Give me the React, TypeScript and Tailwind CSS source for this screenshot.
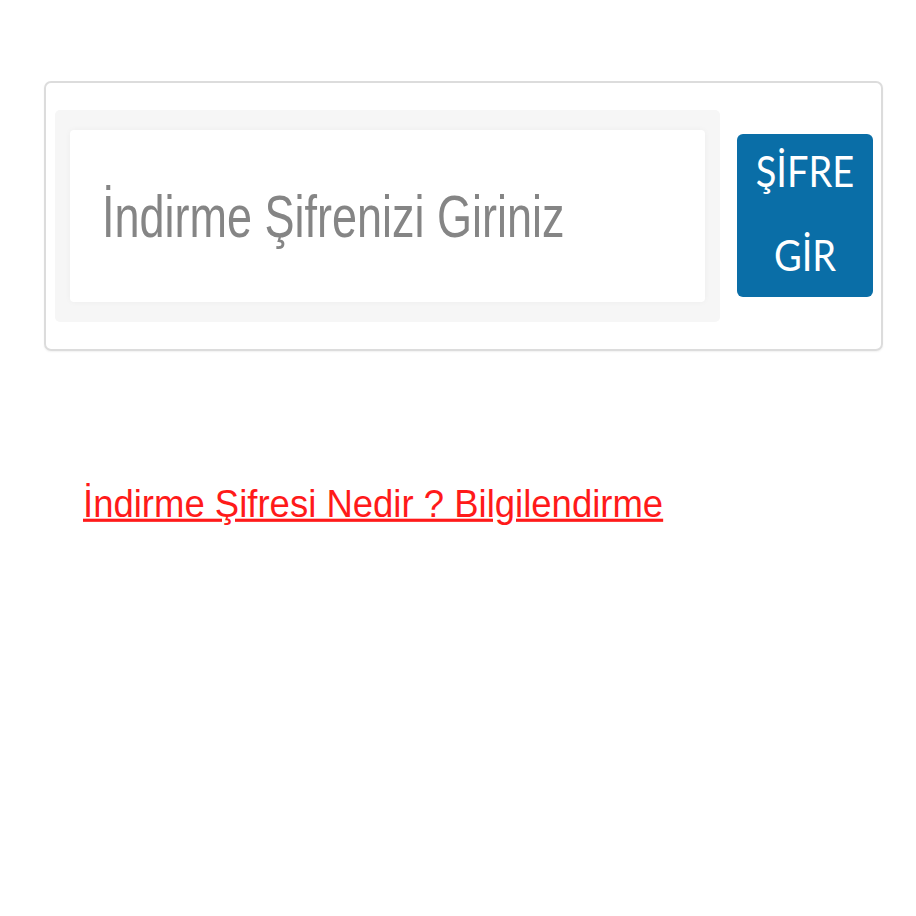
import React from 'react';

export default function App() {
  return (
    <div className="w-[916px] h-[916px] bg-white pt-[81px] pl-[44px]" style={{ fontFamily: '"Liberation Sans", Arial, sans-serif' }}>
      {/* Password card */}
      <div className="w-[839px] h-[270px] border-2 border-[#dcdcdc] rounded-[7px] shadow-[0_1px_2px_rgba(0,0,0,0.06)] flex items-start pl-[9px] pr-[8px] pt-[27px]">
        <div className="w-[665px] h-[212px] bg-[#f6f6f6] rounded-[5px] px-[15px] py-[20px]">
          <div className="h-full bg-white rounded-[4px] shadow-[0_0_6px_rgba(0,0,0,0.04)] flex items-center pl-[32px]">
            <span className="inline-block text-[45px] text-[#858585] leading-none scale-y-[1.3]">İndirme Şifrenizi Giriniz</span>
          </div>
        </div>
        <button
          className="ml-[17px] mt-[24px] w-[136px] h-[163px] bg-[#0a6ea7] rounded-[6px] text-white text-[38px] flex flex-col items-center justify-center"
          style={{ fontFamily: 'Lato, "Open Sans", sans-serif' }}
        >
          <span className="inline-block leading-[84px] scale-y-[1.1] -mt-[8px]">ŞİFRE</span>
          <span className="inline-block leading-[84px] scale-y-[1.1]">GİR</span>
        </button>
      </div>

      {/* Info link */}
      <div className="mt-[135px] pl-[39px]">
        <a href="#" className="inline-block text-[36.5px] text-[#ff1a1a] underline leading-none scale-y-[1.05]">
          İndirme Şifresi Nedir ? Bilgilendirme
        </a>
      </div>
    </div>
  );
}
